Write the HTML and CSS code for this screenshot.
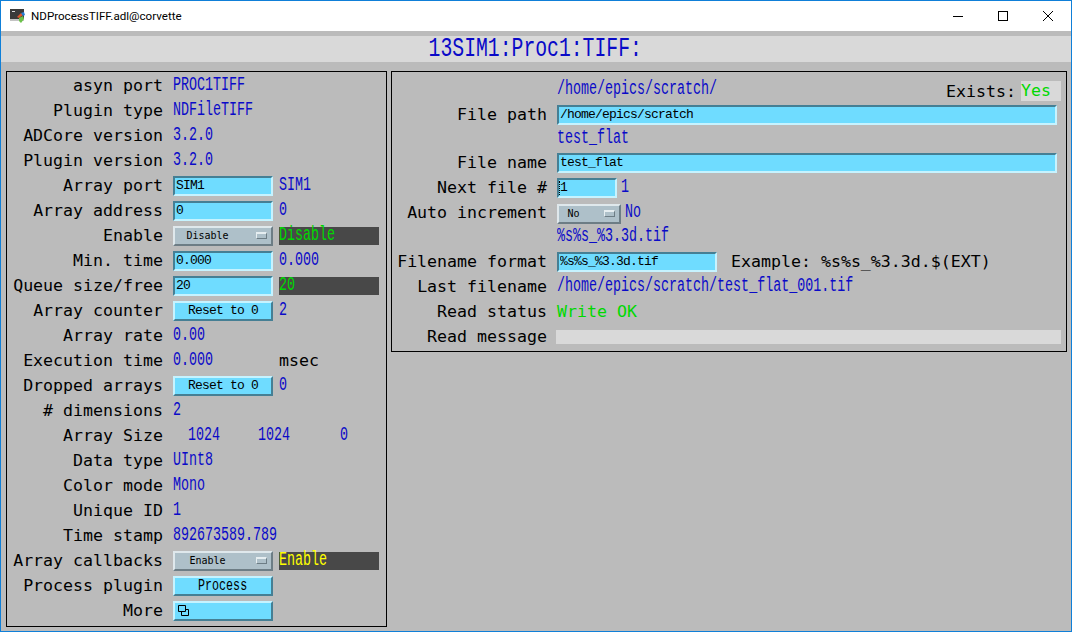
FILE: index.html
```html
<!DOCTYPE html>
<html lang="en">
<head>
    <meta charset="UTF-8">
    <title>NDProcessTIFF.adl@corvette</title>
    <link rel="stylesheet" href="styles.css">
</head>
<body>
<div class="window">
    <div class="titlebar">
        <svg class="appicon" width="16" height="16" viewBox="0 0 16 16">
            <rect x="0" y="1" width="14" height="10" fill="#3a3a3a"/>
            <rect x="0" y="11" width="14" height="2" fill="#c4c4c4"/>
            <path d="M2 3h3v1H2z" fill="#ddd"/>
            <path d="M7 9l4-4 2 2-4 3z" fill="#e0562a"/>
            <path d="M11 5l3-1 1 3-2 1z" fill="#2a7fd6"/>
            <path d="M9 10l4-2 1 3-3 4-2-2z" fill="#6cc24a"/>
        </svg>
        <span class="wintitle">NDProcessTIFF.adl@corvette</span>
        <div class="wincontrols">
            <svg width="10" height="10" viewBox="0 0 10 10"><path d="M0 5.5h10" stroke="#000" fill="none"/></svg>
            <svg width="10" height="10" viewBox="0 0 10 10"><rect x=".5" y=".5" width="9" height="9" stroke="#000" fill="none"/></svg>
            <svg width="10" height="10" viewBox="0 0 10 10"><path d="M0 0l10 10M10 0L0 10" stroke="#000" fill="none"/></svg>
        </div>
    </div>
    <div class="screen">
        <div class="heading"><span class="heading-text">13SIM1:Proc1:TIFF:</span></div>
        <div class="panels">
            <div class="panel panel-left">
                <div class="row"><span class="label">asyn port</span><span class="val">PROC1TIFF</span></div>
                <div class="row"><span class="label">Plugin type</span><span class="val">NDFileTIFF</span></div>
                <div class="row"><span class="label">ADCore version</span><span class="val">3.2.0</span></div>
                <div class="row"><span class="label">Plugin version</span><span class="val">3.2.0</span></div>
                <div class="row"><span class="label">Array port</span><input class="field w100" type="text" value="SIM1"><span class="val after">SIM1</span></div>
                <div class="row"><span class="label">Array address</span><input class="field w100" type="text" value="0"><span class="val after">0</span></div>
                <div class="row"><span class="label">Enable</span><div class="menu w100"><span class="menu-text">Disable</span><i class="menu-mark"></i></div><div class="status"><span class="val green">Disable</span></div></div>
                <div class="row"><span class="label">Min. time</span><input class="field w100" type="text" value="0.000"><span class="val after">0.000</span></div>
                <div class="row"><span class="label">Queue size/free</span><input class="field w100" type="text" value="20"><div class="status"><span class="val green">20</span></div></div>
                <div class="row"><span class="label">Array counter</span><button class="btn w100">Reset to 0</button><span class="val after">2</span></div>
                <div class="row"><span class="label">Array rate</span><span class="val">0.00</span></div>
                <div class="row"><span class="label">Execution time</span><span class="val">0.000</span><span class="label unit">msec</span></div>
                <div class="row"><span class="label">Dropped arrays</span><button class="btn w100">Reset to 0</button><span class="val after">0</span></div>
                <div class="row"><span class="label"># dimensions</span><span class="val">2</span></div>
                <div class="row"><span class="label">Array Size</span>
                    <div class="sizes">
                        <span class="size"><span class="val mid">1024</span></span>
                        <span class="size"><span class="val mid">1024</span></span>
                        <span class="size"><span class="val mid">0</span></span>
                    </div>
                </div>
                <div class="row"><span class="label">Data type</span><span class="val">UInt8</span></div>
                <div class="row"><span class="label">Color mode</span><span class="val">Mono</span></div>
                <div class="row"><span class="label">Unique ID</span><span class="val">1</span></div>
                <div class="row"><span class="label">Time stamp</span><span class="val">892673589.789</span></div>
                <div class="row"><span class="label">Array callbacks</span><div class="menu w100"><span class="menu-text">Enable</span><i class="menu-mark"></i></div><div class="status"><span class="val yellow">Enable</span></div></div>
                <div class="row"><span class="label">Process plugin</span><button class="btn w100"><span class="btn-big">Process</span></button></div>
                <div class="row"><span class="label">More</span><button class="btn w100 btn-more">
                    <svg width="11" height="11" viewBox="0 0 11 11"><path d="M.5.5h7v6h-7zM3.5 6.5v4h7v-6h-3" fill="none" stroke="#000"/></svg>
                </button></div>
            </div>
            <div class="panel panel-right">
                <div class="row row-first"><span class="label"></span><span class="val">/home/epics/scratch/</span>
                    <div class="exists"><span class="label exists-label">Exists:</span><span class="yes">Yes</span></div>
                </div>
                <div class="row"><span class="label">File path</span><input class="field w500" type="text" value="/home/epics/scratch"></div>
                <div class="row shorter"><span class="label"></span><span class="val">test_flat</span></div>
                <div class="row"><span class="label">File name</span><input class="field w500" type="text" value="test_flat"></div>
                <div class="row"><span class="label">Next file #</span>
                    <div class="caret-wrap"><input class="field w60" type="text" value="1"><i class="caret"></i></div>
                    <span class="val after-small">1</span>
                </div>
                <div class="row"><span class="label">Auto increment</span><div class="menu w64"><span class="menu-text">No</span><i class="menu-mark"></i></div><span class="val after-small">No</span></div>
                <div class="row short"><span class="label"></span><span class="val">%s%s_%3.3d.tif</span></div>
                <div class="row"><span class="label">Filename format</span><input class="field w160" type="text" value="%s%s_%3.3d.tif"><span class="label example">Example: %s%s_%3.3d.$(EXT)</span></div>
                <div class="row"><span class="label">Last filename</span><span class="val">/home/epics/scratch/test_flat_001.tif</span></div>
                <div class="row"><span class="label">Read status</span><span class="label ok">Write OK</span></div>
                <div class="row"><span class="label">Read message</span><div class="msgbar"></div></div>
            </div>
        </div>
    </div>
</div>
</body>
</html>
```

FILE: styles.css
```css
html, body {
    margin: 0;
    padding: 0;
}
.window {
    width: 1072px;
    height: 632px;
    box-sizing: border-box;
    border: 1px solid #0f7fd8;
    display: flex;
    flex-direction: column;
    background-color: #bbbbbb;
}
.titlebar {
    height: 30px;
    background-color: #fff;
    display: flex;
    align-items: center;
    flex-shrink: 0;
}
.appicon {
    margin-left: 9px;
    margin-right: 5px;
}
.wintitle {
    font-family: Roboto, sans-serif;
    font-size: 11.6px;
    color: #000;
}
.wincontrols {
    margin-left: auto;
    display: flex;
    gap: 35px;
    margin-right: 18px;
}
.screen {
    flex: 1;
    padding-top: 5px;
}
.heading {
    height: 26px;
    background-color: #d9d9d9;
    text-align: center;
}
.heading-text {
    display: inline-block;
    font-family: "Liberation Mono", monospace;
    font-size: 28px;
    line-height: 26px;
    color: #0a0ac8;
    transform: scaleX(.705);
    margin-left: -1px;
}
.panels {
    display: flex;
    gap: 4px;
    padding: 9px 0 0 5px;
    align-items: flex-start;
}
.panel {
    border: 1px solid #000;
    box-sizing: border-box;
}
.panel-left {
    width: 381px;
    height: 556px;
    padding-top: 1px;
}
.panel-right {
    width: 676px;
    height: 281px;
    padding-top: 5px;
}
.row {
    display: flex;
    align-items: center;
    height: 25px;
}
.row.short {
    height: 24px;
}
.row.shorter {
    height: 23px;
}
.label {
    font-family: "DejaVu Sans Mono", monospace;
    font-size: 16.6px;
    color: #000;
    width: 156px;
    margin-right: 10px;
    text-align: right;
    white-space: nowrap;
    flex-shrink: 0;
}
.panel-right .label {
    width: 155px;
}
.val {
    display: inline-block;
    font-family: "Liberation Mono", monospace;
    font-size: 20px;
    line-height: 22px;
    margin-top: -2px;
    color: #0a0ac8;
    white-space: nowrap;
    transform: scaleX(.667);
    transform-origin: left center;
}
.val.after {
    margin-left: 6px;
}
.val.after-small {
    margin-left: 4px;
}
.val.mid {
    width: 70px;
    text-align: center;
    transform-origin: center center;
}
.green {
    color: #00d800;
}
.yellow {
    color: #ffff00;
}
.status {
    width: 100px;
    height: 18px;
    margin-left: 6px;
    background-color: #484848;
    display: flex;
    align-items: center;
}
.field {
    box-sizing: border-box;
    height: 20px;
    margin: 0;
    padding: 0 0 0 1px;
    font-family: "Liberation Mono", monospace;
    font-size: 13px;
    letter-spacing: -.8px;
    color: #000;
    background-color: #6fdcff;
    border-style: solid;
    border-width: 2px;
    border-color: #457f94 #c6f3ff #c6f3ff #457f94;
    outline: none;
    flex-shrink: 0;
}
.w100 { width: 100px; }
.w500 { width: 500px; }
.w60 { width: 60px; }
.w64 { width: 64px; margin-top: 2px; }
.w160 { width: 160px; }
.btn {
    box-sizing: border-box;
    height: 20px;
    margin: 0;
    padding: 0;
    font-family: "Liberation Mono", monospace;
    font-size: 13px;
    letter-spacing: -.8px;
    line-height: 16px;
    color: #000;
    background-color: #6fdcff;
    border-style: solid;
    border-width: 2px;
    border-color: #c6f3ff #457f94 #457f94 #c6f3ff;
    flex-shrink: 0;
}
.btn-big {
    display: inline-block;
    font-size: 16px;
    letter-spacing: 0;
    transform: scaleX(.73);
}
.btn-more {
    display: flex;
    align-items: center;
    padding-left: 3px;
}
.menu {
    box-sizing: border-box;
    height: 20px;
    background-color: #aec0c9;
    border-style: solid;
    border-width: 2px;
    border-color: #dfe8ec #6d7d85 #6d7d85 #dfe8ec;
    display: flex;
    align-items: center;
    flex-shrink: 0;
}
.menu-text {
    font-family: "DejaVu Sans Mono", monospace;
    font-size: 10px;
    flex: 1;
    text-align: center;
    padding-right: 16px;
    color: #000;
}
.menu-mark {
    width: 11px;
    height: 7px;
    box-sizing: border-box;
    margin-right: 4px;
    background-color: #aec0c9;
    border-style: solid;
    border-width: 2px 1px 1px 1px;
    border-color: #e6eef1 #6d7d85 #6d7d85 #e6eef1;
    flex-shrink: 0;
}
.sizes {
    display: flex;
    margin-left: -4px;
}
.size {
    width: 70px;
}
.label.unit {
    width: auto;
    margin-left: 46px;
    margin-right: 0;
}
.exists {
    margin-left: auto;
    margin-right: 5px;
    margin-bottom: 1px;
    display: flex;
    align-items: center;
}
.panel-right .label.exists-label {
    width: auto;
    margin-right: 5px;
}
.yes {
    box-sizing: border-box;
    width: 40px;
    height: 20px;
    line-height: 20px;
    background-color: #d9d9d9;
    font-family: "DejaVu Sans Mono", monospace;
    font-size: 16.6px;
    color: #00d800;
}
.row-first {
    align-items: flex-end;
}
.row-first .val {
    align-self: center;
}
.caret-wrap {
    position: relative;
    display: flex;
}
.caret {
    position: absolute;
    left: 2px;
    top: 3px;
    height: 14px;
    border-left: 1px dotted #000;
}
.panel-right .label.example {
    width: auto;
    margin-left: 14px;
    margin-right: 0;
}
.panel-right .label.ok {
    width: auto;
    color: #00d800;
    text-align: left;
    margin-right: 0;
}
.msgbar {
    width: 505px;
    height: 14px;
    margin-left: -1px;
    background-color: #d9d9d9;
}
```
